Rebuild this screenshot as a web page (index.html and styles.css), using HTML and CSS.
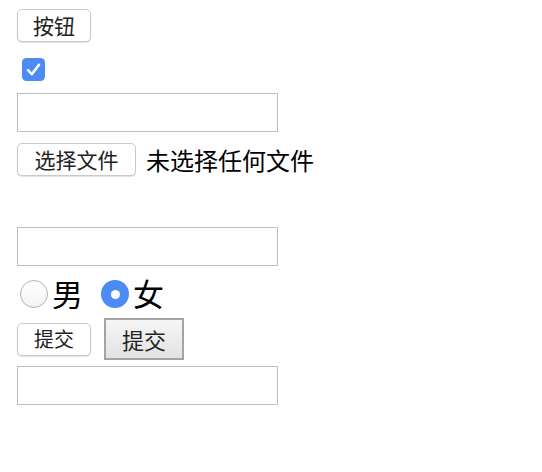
FILE: index.html
```html
<!DOCTYPE html>
<html lang="zh">
<head>
<meta charset="utf-8">
<link rel="stylesheet" href="styles.css">
</head>
<body>
<form class="page">
  <div class="row r1"><button type="button" class="btn btn-a">按钮</button></div>
  <div class="row r2">
    <span class="check">
      <svg width="23" height="23" viewBox="0 0 23 23"><rect x="0" y="0" width="23" height="23" rx="4.5" fill="#4b8bf4"/><path d="M6 12.2 L9.8 16.2 L17 6.8" fill="none" stroke="#fff" stroke-width="2.6" stroke-linecap="round" stroke-linejoin="round"/></svg>
    </span>
  </div>
  <div class="row r3"><span class="field"></span></div>
  <div class="row r4"><span class="btn btn-file">选择文件</span><span class="nofile">未选择任何文件</span></div>
  <div class="row r5"><span class="field"></span></div>
  <div class="row r6">
    <span class="radio"></span><span class="rlabel">男</span>
    <span class="radio on"></span><span class="rlabel">女</span>
  </div>
  <div class="row r7"><span class="btn btn-s">提交</span><span class="btn-g">提交</span></div>
  <div class="row r8"><span class="field"></span></div>
</form>
</body>
</html>
```
FILE: styles.css
```css
html, body { margin: 0; padding: 0; background: #fff; }
body { font-family: "Noto Sans CJK SC", "Noto Sans", sans-serif; color: #000; }
.page { padding: 9px 0 0 17px; display: flex; flex-direction: column; align-items: flex-start; }
.row { display: flex; align-items: center; }
.btn {
  box-sizing: border-box; display: inline-flex; align-items: center; justify-content: center;
  height: 33px; background: #fff; border: 1px solid #c9c9c9; border-radius: 5px;
  box-shadow: 0 1px 1px rgba(0,0,0,0.12); font: 21px/1 "Noto Sans CJK SC", sans-serif; color: #222; padding: 0;
}
.btn-a { width: 74px; }
.r2 { margin-top: 16px; padding-left: 5px; height: 23px; }
.check { display: block; width: 23px; height: 23px; }
.check svg { display: block; }
.field { display: block; box-sizing: border-box; width: 261px; height: 39px; border: 1px solid #bdbdbd; background: #fff; }
.r3 { margin-top: 12px; }
.r4 { margin-top: 11px; }
.btn-file { width: 119px; }
.nofile { font-size: 24px; line-height: 1; margin-left: 10px; color: #000; }
.r5 { margin-top: 51px; }
.r6 { margin-top: 11px; height: 34px; }
.radio { box-sizing: border-box; display: block; width: 28px; height: 28px; border-radius: 50%; border: 1px solid #b3b3b3; background: linear-gradient(#fff, #f3f3f3); margin-left: 3px; }
.radio.on { border: none; background: #4b8bf4; position: relative; }
.radio.on::after { content: ""; position: absolute; left: 9.5px; top: 9.5px; width: 9px; height: 9px; border-radius: 50%; background: #fff; }
.rlabel { font-size: 31px; line-height: 1; margin-left: 4px; margin-right: 15px; margin-top: -3px; }
.r7 { margin-top: 7px; height: 42px; }
.btn-s { width: 74px; font-size: 20px; }
.btn-g {
  box-sizing: border-box; display: inline-flex; align-items: center; justify-content: center;
  width: 80px; height: 42px; margin-left: 13px; border: 2px solid #a4a4a4;
  background: linear-gradient(#f6f6f6, #e3e3e3); font: 22px/1 "Noto Sans CJK SC", sans-serif; color: #222;
}
.r8 { margin-top: 6px; }
```
